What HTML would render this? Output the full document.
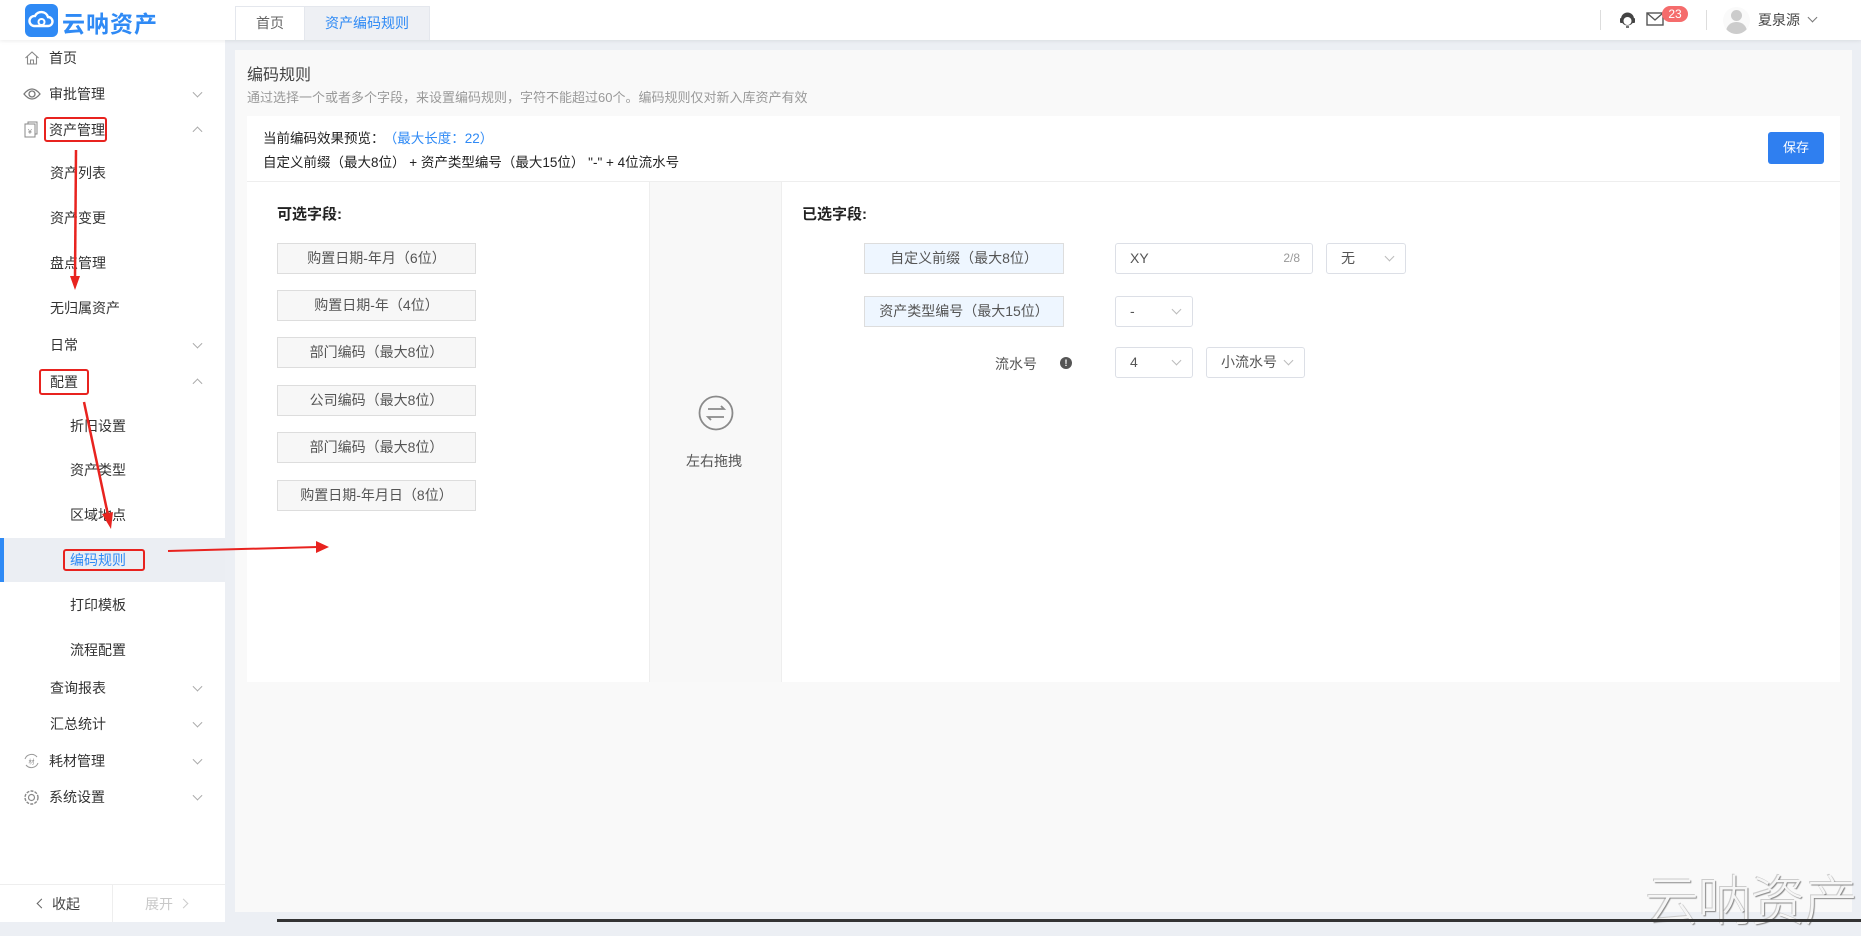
<!DOCTYPE html>
<html><head><meta charset="utf-8"><style>
*{margin:0;padding:0;box-sizing:border-box}
body{width:1861px;height:922px;overflow:hidden;background:#eceff4;font-family:"Liberation Sans","Noto Sans CJK SC",sans-serif;font-size:14px;color:#333;position:relative}
.a{position:absolute}
.hdr{left:0;top:0;width:1861px;height:40px;background:#fff;box-shadow:0 1px 4px rgba(0,0,0,.08);z-index:2}
.side{left:0;top:40px;width:225px;height:882px;background:#fff}
.mi{position:absolute;font-size:14px;color:#333;line-height:20px;transform:translateY(-50%)}
.chev{position:absolute;left:194px;width:7px;height:7px;border-right:1px solid #aaa;border-bottom:1px solid #aaa}
.dn{transform:translateY(-70%) rotate(45deg)}
.up{transform:translateY(-30%) rotate(-135deg)}
.card{left:235px;top:50px;width:1617px;height:862px;background:#f9f9f9}
.fbox{position:absolute;left:277px;width:199px;height:31px;border:1px solid #ddd;background:#f7f7f7;text-align:center;line-height:29px;color:#555;font-size:14px}
.sel{position:absolute;height:31px;border:1px solid #dcdfe6;border-radius:3px;background:#fff;line-height:29px;padding-left:14px;color:#555}
.sel i{position:absolute;right:12px;top:9px;width:7px;height:7px;border-right:1px solid #bbb;border-bottom:1px solid #bbb;transform:rotate(45deg)}
.red{position:absolute;border:2px solid #e8231f;border-radius:3px}
</style></head><body>
<div class="a hdr">
  <div class="a" style="left:25px;top:4px;width:33px;height:33px;background:#2f8af5;border-radius:6px">
    <svg width="33" height="33" viewBox="0 0 33 33"><path d="M9 22a5 5 0 0 1 1-10 7 7 0 0 1 13 1 4.5 4.5 0 0 1 0 9z" fill="none" stroke="#fff" stroke-width="2.4"/><circle cx="16.5" cy="18" r="3" fill="none" stroke="#fff" stroke-width="2"/></svg>
  </div>
  <div class="a" style="left:62px;top:5px;font-size:23px;font-weight:bold;color:#2f8af5;letter-spacing:1px">云呐资产</div>
  <div class="a" style="left:235px;top:6px;width:70px;height:34px;border:1px solid #e4e7ed;border-bottom:none;background:#fff;text-align:center;line-height:32px;color:#666">首页</div>
  <div class="a" style="left:304px;top:6px;width:126px;height:34px;border:1px solid #e4e7ed;border-bottom:none;background:#eef0f4;text-align:center;line-height:32px;color:#2f8af5">资产编码规则</div>
  <div class="a" style="left:1600px;top:10px;width:1px;height:20px;background:#ddd"></div>
  <svg class="a" style="left:1619px;top:11px" width="17" height="18" viewBox="0 0 17 18"><circle cx="8.5" cy="8" r="6.5" fill="#444"/><circle cx="8.5" cy="10" r="4" fill="#fff"/><rect x="1" y="7" width="3" height="5" rx="1" fill="#444"/><rect x="13" y="7" width="3" height="5" rx="1" fill="#444"/><path d="M7 16h3" stroke="#444" stroke-width="1.5"/></svg>
  <svg class="a" style="left:1646px;top:12px" width="18" height="14" viewBox="0 0 18 14"><rect x="1" y="1" width="16" height="12" fill="none" stroke="#555" stroke-width="1.4"/><path d="M1 1l8 7 8-7" fill="none" stroke="#555" stroke-width="1.4"/></svg>
  <div class="a" style="left:1662px;top:6px;width:26px;height:16px;background:#f56c6c;border-radius:8px;color:#fff;font-size:12px;text-align:center;line-height:16px">23</div>
  <div class="a" style="left:1706px;top:10px;width:1px;height:20px;background:#ddd"></div>
  <div class="a" style="left:1723px;top:7px;width:27px;height:27px;border-radius:50%;background:#fafafa;overflow:hidden"><div class="a" style="left:8px;top:3px;width:11px;height:11px;border-radius:50%;background:#ccc"></div><div class="a" style="left:3px;top:15px;width:21px;height:14px;border-radius:10px 10px 0 0;background:#ccc"></div></div>
  <div class="a" style="left:1758px;top:10px;font-size:14px;color:#444">夏泉源</div>
  <div class="a" style="left:1809px;top:14px;width:7px;height:7px;border-right:1px solid #777;border-bottom:1px solid #777;transform:rotate(45deg)"></div>
</div>

<div class="a side">
<div class="a" style="left:0;top:498px;width:225px;height:44px;background:#ebeef3"></div>
<div class="a" style="left:0;top:498px;width:4px;height:44px;background:#2f8af5"></div>
</div>
<div class="a" style="left:0;top:40px;width:225px;height:882px">
 <svg class="a" style="left:24px;top:10px" width="16" height="16" viewBox="0 0 16 16"><path d="M1.5 8L8 2l6.5 6M3.5 6.5V14h9V6.5" fill="none" stroke="#888" stroke-width="1.1"/><path d="M6.5 14v-4h3v4" fill="none" stroke="#888"/></svg>
 <div class="mi" style="left:49px;top:18px">首页</div>
 <svg class="a" style="left:23px;top:47px" width="18" height="14" viewBox="0 0 18 14"><path d="M1 7q8-10 16 0q-8 10-16 0z" fill="none" stroke="#777" stroke-width="1.3"/><circle cx="9" cy="7" r="3" fill="none" stroke="#777" stroke-width="1.3"/></svg>
 <div class="mi" style="left:49px;top:54px">审批管理</div><div class="chev dn" style="top:54px"></div>
 <svg class="a" style="left:24px;top:81px" width="14" height="17" viewBox="0 0 14 17"><rect x="1" y="3" width="10" height="13" fill="none" stroke="#888"/><path d="M4 3V1h9v12h-2" fill="none" stroke="#888"/><text x="6" y="13" font-size="7" text-anchor="middle" fill="#888">¥</text></svg>
 <div class="mi" style="left:49px;top:90px">资产管理</div><div class="chev up" style="top:90px"></div>
 <div class="mi" style="left:50px;top:133px">资产列表</div>
 <div class="mi" style="left:50px;top:178px">资产变更</div>
 <div class="mi" style="left:50px;top:223px">盘点管理</div>
 <div class="mi" style="left:50px;top:268px">无归属资产</div>
 <div class="mi" style="left:50px;top:305px">日常</div><div class="chev dn" style="top:305px"></div>
 <div class="mi" style="left:50px;top:342px">配置</div><div class="chev up" style="top:342px"></div>
 <div class="mi" style="left:70px;top:386px">折旧设置</div>
 <div class="mi" style="left:70px;top:430px">资产类型</div>
 <div class="mi" style="left:70px;top:475px">区域地点</div>
 <div class="mi" style="left:70px;top:520px;color:#2f8af5">编码规则</div>
 <div class="mi" style="left:70px;top:565px">打印模板</div>
 <div class="mi" style="left:70px;top:610px">流程配置</div>
 <div class="mi" style="left:50px;top:648px">查询报表</div><div class="chev dn" style="top:648px"></div>
 <div class="mi" style="left:50px;top:684px">汇总统计</div><div class="chev dn" style="top:684px"></div>
 <svg class="a" style="left:23px;top:713px" width="17" height="16" viewBox="0 0 17 16"><path d="M2 6a7 7 0 0 1 12-2M15 10a7 7 0 0 1-12 2" fill="none" stroke="#999"/><text x="8.5" y="11" font-size="6" text-anchor="middle" fill="#888">材</text></svg>
 <div class="mi" style="left:49px;top:721px">耗材管理</div><div class="chev dn" style="top:721px"></div>
 <svg class="a" style="left:23px;top:749px" width="17" height="17" viewBox="0 0 17 17"><circle cx="8.5" cy="8.5" r="6.5" fill="none" stroke="#888" stroke-width="1.4" stroke-dasharray="3 1.2"/><circle cx="8.5" cy="8.5" r="3" fill="none" stroke="#888" stroke-width="1.2"/></svg>
 <div class="mi" style="left:49px;top:757px">系统设置</div><div class="chev dn" style="top:757px"></div>
 <div class="a" style="left:0;top:844px;width:225px;height:1px;background:#eee"></div>
 <div class="a" style="left:112px;top:844px;width:1px;height:38px;background:#eee"></div>
 <div class="a" style="left:38px;top:860px;width:7px;height:7px;border-left:1px solid #666;border-bottom:1px solid #666;transform:rotate(45deg)"></div>
 <div class="mi" style="left:52px;top:864px;color:#444">收起</div>
 <div class="mi" style="left:145px;top:864px;color:#c8c8c8">展开</div>
 <div class="a" style="left:180px;top:860px;width:7px;height:7px;border-right:1px solid #ccc;border-top:1px solid #ccc;transform:rotate(45deg)"></div>
</div>

<div class="a card"></div>
<div class="a" style="left:247px;top:61px;font-size:16px;color:#444">编码规则</div>
<div class="a" style="left:247px;top:87px;font-size:13px;color:#999">通过选择一个或者多个字段，来设置编码规则，字符不能超过60个。编码规则仅对新入库资产有效</div>
<div class="a" style="left:247px;top:116px;width:1593px;height:566px;background:#fff"></div>
<div class="a" style="left:247px;top:181px;width:1593px;height:1px;background:#eee"></div>
<div class="a" style="left:263px;top:127px;font-size:13.5px;color:#222">当前编码效果预览：<span style="color:#2f8af5;margin-left:6px">（最大长度：22）</span></div>
<div class="a" style="left:263px;top:151px;font-size:13.5px;color:#222">自定义前缀（最大8位） + 资产类型编号（最大15位） "-" + 4位流水号</div>
<div class="a" style="left:1768px;top:132px;width:56px;height:32px;background:#2f7ff0;border-radius:3px;color:#fff;font-size:13px;text-align:center;line-height:32px">保存</div>

<div class="a" style="left:649px;top:182px;width:133px;height:500px;background:#f8f8f8;border-left:1px solid #eee;border-right:1px solid #eee"></div>
<svg class="a" style="left:697px;top:394px" width="38" height="38" viewBox="0 0 38 38"><circle cx="19" cy="19" r="16.5" fill="none" stroke="#8a8a8a" stroke-width="1.8"/><path d="M11 15h16l-3-3M27 23H11l3 3" fill="none" stroke="#8a8a8a" stroke-width="1.8"/></svg>
<div class="a" style="left:686px;top:451px;color:#555">左右拖拽</div>

<div class="a" style="left:277px;top:203px;font-size:15px;font-weight:bold;color:#222">可选字段:</div>
<div class="fbox" style="top:243px">购置日期-年月（6位）</div>
<div class="fbox" style="top:290px">购置日期-年（4位）</div>
<div class="fbox" style="top:337px">部门编码（最大8位）</div>
<div class="fbox" style="top:385px">公司编码（最大8位）</div>
<div class="fbox" style="top:432px">部门编码（最大8位）</div>
<div class="fbox" style="top:480px">购置日期-年月日（8位）</div>

<div class="a" style="left:802px;top:203px;font-size:15px;font-weight:bold;color:#222">已选字段:</div>
<div class="fbox" style="left:864px;width:200px;top:243px;background:#eef6ff">自定义前缀（最大8位）</div>
<div class="fbox" style="left:864px;width:200px;top:296px;background:#eef6ff">资产类型编号（最大15位）</div>
<div class="sel" style="left:1115px;top:243px;width:198px">XY<span style="position:absolute;right:12px;font-size:12px;color:#999">2/8</span></div>
<div class="sel" style="left:1326px;top:243px;width:80px">无<i></i></div>
<div class="sel" style="left:1115px;top:296px;width:78px">-<i></i></div>
<div class="a" style="left:995px;top:354px;color:#555">流水号</div>
<div class="a" style="left:1060px;top:357px;width:12px;height:12px;border-radius:50%;background:#555;color:#fff;font-size:9px;font-weight:bold;text-align:center;line-height:12px">!</div>
<div class="sel" style="left:1115px;top:347px;width:78px">4<i></i></div>
<div class="sel" style="left:1206px;top:347px;width:99px">小流水号<i></i></div>

<div class="red" style="left:44px;top:117px;width:63px;height:25px"></div>
<div class="red" style="left:39px;top:369px;width:50px;height:26px"></div>
<div class="red" style="left:63px;top:549px;width:82px;height:22px"></div>
<svg class="a" style="left:0;top:0" width="400" height="600" viewBox="0 0 400 600">
 <path d="M76 150L75 278" stroke="#e8231f" stroke-width="2.5"/><path d="M70 276l5 14 5-14z" fill="#e8231f"/>
 <path d="M84 402L108 515" stroke="#e8231f" stroke-width="2.5"/><path d="M102 514l9 15 2-17z" fill="#e8231f"/>
 <path d="M168 551L318 547" stroke="#e8231f" stroke-width="2"/><path d="M316 541l13 6-13 6z" fill="#e8231f"/>
</svg>

<div class="a" style="left:1645px;top:857px;font-size:54px;color:#f6f6f6;text-shadow:1px 1px 1px #888,-1px -1px 0 #ccc;font-weight:300;letter-spacing:-1px">云呐资产</div>
<div class="a" style="left:277px;top:919px;width:1584px;height:3px;background:#333"></div>
</body></html>
